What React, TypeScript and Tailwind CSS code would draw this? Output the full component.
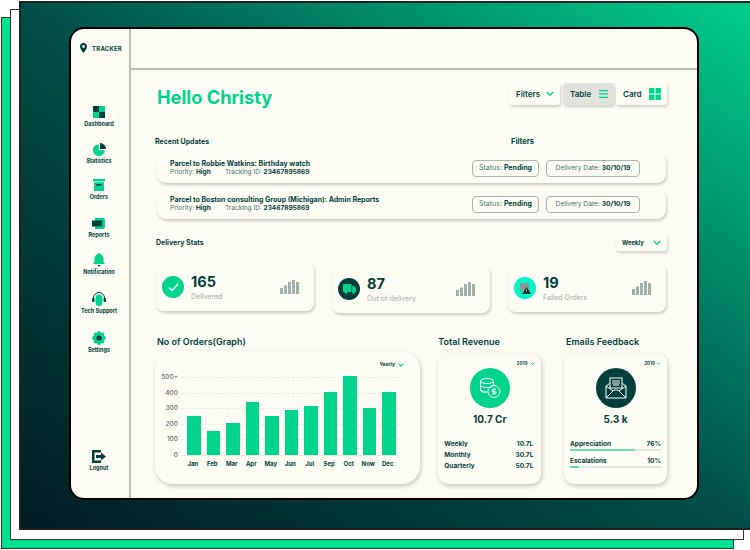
import React from "react";

const F = "font-['Inter','Liberation_Sans',sans-serif]";
const DARK = "#023f3c";
const GREEN = "#00d38c";

const Chevron = ({ w = 8 }: { w?: number }) => (
  <svg width={w} height={w * 0.7} viewBox="0 0 10 7" fill="none">
    <path d="M1 1.2 5 5.2 9 1.2" stroke={GREEN} strokeWidth="1.8" />
  </svg>
);

const nav: [string, React.ReactNode, string][] = [
  ["Dashboard", (
    <svg width="12" height="12" viewBox="0 0 12 12"><rect width="6" height="6" fill={DARK} /><rect x="6" width="6" height="6" fill={GREEN} /><rect y="6" width="6" height="6" fill={GREEN} /><rect x="6" y="6" width="6" height="6" fill={DARK} /></svg>
  ), ""],
  ["Statistics", (
    <svg width="13" height="13" viewBox="0 0 13 13"><path d="M5.8 1.3A5.9 5.9 0 1 0 11.7 7.2H5.8Z" fill={GREEN} /><path d="M7 0A6 6 0 0 1 13 6H7Z" fill={DARK} /></svg>
  ), "mt-[14px]"],
  ["Orders", (
    <svg width="12" height="12" viewBox="0 0 12 12"><rect width="12" height="2.5" fill={GREEN} /><rect x="1" y="3.2" width="10" height="8.8" fill={GREEN} /><rect x="3.5" y="5" width="5" height="1.6" fill={DARK} /></svg>
  ), "mt-[13px]"],
  ["Reports", (
    <svg width="13" height="11" viewBox="0 0 13 11"><path d="M3 0h8q2 0 2 2v7q0 2-2 2H3Z" fill={GREEN} /><rect y="2.5" width="10" height="6" fill={DARK} /></svg>
  ), "mt-[15px]"],
  ["Notification", (
    <svg width="12" height="14" viewBox="0 0 12 14"><path d="M6 0q1 0 1 1 3.5 1 3.5 5v3l1.500 2H0l1.500-2V6Q1.500 2 5 1q0-1 1-1Z" fill={GREEN} /><path d="M4.300 12h3.400L6 13.800Z" fill={DARK} /></svg>
  ), "mt-[14px]"],
  ["Tech Support", (
    <svg width="14" height="15" viewBox="0 0 14 15"><path d="M1.500 7V6a5.500 5.500 0 0 1 11 0v1" fill="none" stroke={DARK} strokeWidth="1" /><rect x="3.500" y="2.500" width="7" height="11.500" rx="3.500" fill={GREEN} /><rect x="0" y="6" width="2.500" height="4" rx="1" fill={DARK} /><rect x="11.500" y="6" width="2.500" height="4" rx="1" fill={DARK} /></svg>
  ), "mt-[16px]"],
  ["Settings", (
    <svg width="14" height="14" viewBox="0 0 14 14"><g fill={GREEN}><circle cx="7" cy="7" r="5.400" /><circle cx="7" cy="2" r="1.900" /><circle cx="7" cy="12" r="1.900" /><circle cx="2" cy="7" r="1.900" /><circle cx="12" cy="7" r="1.900" /><circle cx="3.500" cy="3.500" r="1.900" /><circle cx="10.500" cy="3.500" r="1.900" /><circle cx="3.500" cy="10.500" r="1.900" /><circle cx="10.500" cy="10.500" r="1.900" /></g><circle cx="7" cy="7" r="2.600" fill={DARK} /></svg>
  ), "mt-[16px]"],
];

const NavItem = ({ label, icon, cls = "" }: { label: string; icon: React.ReactNode; cls?: string }) => (
  <div className={`flex flex-col items-center ${cls}`}>
    <div className="h-[14px] flex items-center justify-center">{icon}</div>
    <div className="text-[5.500px] leading-[7px] mt-[2px] font-bold text-[#023f3c] whitespace-nowrap">{label}</div>
  </div>
);

const Btn = ({ label, icon, active, cls = "" }: { label: string; icon: React.ReactNode; active?: boolean; cls?: string }) => (
  <div className={`w-[51px] h-[22px] rounded-[3px] flex items-center justify-between pl-[7px] pr-[6px] text-[8px] font-semibold text-[#023f3c] shadow-[1px_2px_3px_rgba(0,0,0,0.18)] ${active ? "bg-[#e2e2df]" : "bg-[#fdfcf4]"} ${cls}`}>
    <span>{label}</span>
    {icon}
  </div>
);

const UpdateRow = ({ title }: { title: string }) => (
  <div className="h-[30px] w-[509px] ml-[2px] rounded-[9px] bg-[#fdfcf4] shadow-[1px_2px_3px_rgba(0,0,0,0.2)] flex items-center pl-[13px]">
    <div className="w-[302px]">
      <div className="text-[7px] leading-[8px] font-bold text-[#023f3c] whitespace-nowrap">{title}</div>
      <div className="flex text-[6.500px] leading-[8px] text-[#49706d]">
        <span className="w-[55px]">Priority: <b className="font-bold text-[#023f3c]">High</b></span>
        <span>Tracking ID: <b className="font-bold text-[#023f3c]">23467895869</b></span>
      </div>
    </div>
    <div className="h-[17px] w-[67px] rounded-[4px] border border-[#a9b5b2] flex items-center justify-center text-[7px] text-[#49706d]">
      Status:&nbsp;<b className="font-bold text-[#023f3c]">Pending</b>
    </div>
    <div className="h-[17px] w-[94px] ml-[7px] rounded-[4px] border border-[#a9b5b2] flex items-center justify-center text-[6.700px] text-[#49706d]">
      Delivery Date:&nbsp;<b className="font-bold text-[#023f3c]">30/10/19</b>
    </div>
  </div>
);

const Bars = () => (
  <svg width="19" height="14" viewBox="0 0 19 14" fill="#a4aeae">
    <rect x="0" y="8" width="3" height="6" /><rect x="4" y="5.500" width="3" height="8.500" /><rect x="8" y="2" width="3" height="12" /><rect x="12" y="0" width="3" height="14" /><rect x="16" y="2" width="3" height="12" />
  </svg>
);

const Stat = ({ icon, value, label, cls }: { icon: React.ReactNode; value: string; label: string; cls: string }) => (
  <div className={`w-[158px] h-[48px] rounded-[8px] bg-[#fdfcf4] shadow-[1px_2px_3px_rgba(0,0,0,0.2)] flex items-center pl-[6px] pr-[15px] ${cls}`}>
    {icon}
    <div className="ml-[7px] flex-1">
      <div className="text-[14.500px] leading-[16px] font-bold text-[#023f3c]">{value}</div>
      <div className="text-[7px] leading-[9px] mt-[2px] text-[#a3aaa8]">{label}</div>
    </div>
    <Bars />
  </div>
);

const months: [string, number][] = [["Jan", 245], ["Feb", 150], ["Mar", 200], ["Apr", 335], ["May", 245], ["Jun", 285], ["Jul", 310], ["Sep", 400], ["Oct", 500], ["Now", 300], ["Dec", 400]];
const ticks = ["500+", "400", "300", "200", "100", "0"];

const Chart = () => (
  <div className="w-[265px] h-[133px] rounded-[18px] bg-[#fdfcf4] shadow-[1px_2px_4px_rgba(0,0,0,0.22)] pt-[10px] pl-[3px]">
    <div className="flex items-center justify-end gap-[3px] pr-[16px] h-[8px] text-[5px] font-bold text-[#023f3c]">Yearly <Chevron w={6} /></div>
    <div className="flex mt-[8px]">
      <div className="w-[20px] h-[86px] flex flex-col justify-between text-[6.500px] leading-[8px] font-medium text-[#5a6f6c] text-right -mt-[4px]">
        {ticks.map((t) => <div key={t}>{t}</div>)}
      </div>
      <div className="w-[220px] ml-[3px]">
        <div className="relative h-[79px] border-b border-[#eceae0]">
          <div className="absolute inset-0 flex flex-col justify-between">
            {ticks.slice(0, 5).map((t) => <div key={t} className="border-t border-dashed border-[#eceae0]" />)}
            <div />
          </div>
          <div className="absolute inset-0 pl-[6px] flex items-end gap-[6px]">
            {months.map(([m, v]) => <div key={m} className="w-[13.500px] bg-[#00d38c]" style={{ height: (v / 500) * 79 }} />)}
          </div>
        </div>
        <div className="flex pl-[2px] mt-[4px]">
          {months.map(([m]) => <div key={m} className="w-[19.500px] text-center text-[6px] leading-[8px] font-bold text-[#023f3c]">{m}</div>)}
        </div>
      </div>
    </div>
  </div>
);

const MiniCard = ({ children }: { children: React.ReactNode }) => (
  <div className="w-[103px] h-[131px] rounded-[10px] bg-[#fdfcf4] shadow-[1px_2px_4px_rgba(0,0,0,0.22)] px-[6px] pt-[8px]">{children}</div>
);

export default function App() {
  return (
    <div className={`w-[750px] h-[550px] bg-white overflow-hidden grid ${F}`}>
      <div className="[grid-area:1/1] ml-[1px] mt-[17px] w-[733px] h-[532px] bg-[#00e08e] border border-[#333]" />
      <div className="[grid-area:1/1] ml-[10px] mt-[9px] w-[734px] h-[531px] bg-white border border-[#333]" />
      <div className="[grid-area:1/1] ml-[19px] mt-[1px] h-[529px] w-[731px] border-t-2 border-l-2 border-b-2 border-[#222] bg-[linear-gradient(to_top_right,#011d20_0%,#014f48_50%,#00cf8c_100%)] pl-[48px] pt-[24px]">
        <div className="w-[630px] h-[473px] rounded-[15px] border-2 border-black bg-[#fdfcf4] flex overflow-hidden">
          {/* Sidebar */}
          <div className="w-[60px] shrink-0 h-full border-r-2 border-[#bdbdb8] flex flex-col items-center">
            <div className="flex items-center gap-[5px] mt-[13px] h-[12px] ml-[2px]">
              <svg width="7" height="10" viewBox="0 0 7 10"><path d="M3.500 0A3.500 3.500 0 0 0 0 3.500C0 6 3.500 10 3.500 10S7 6 7 3.500A3.500 3.500 0 0 0 3.500 0Z" fill={DARK} /><circle cx="3.500" cy="3.500" r="1.400" fill="#fdfcf4" /></svg>
              <span className="text-[6px] font-bold tracking-[0.2px] text-[#023f3c]">TRACKER</span>
            </div>
            <div className="mt-[51px] mr-[2px] flex flex-col items-center">
              {nav.map(([l, i, c]) => <NavItem key={l} label={l} icon={i} cls={c} />)}
            </div>
            <div className="mt-auto mb-[26px] mr-[2px]">
              <NavItem label="Logout" icon={
                <svg width="14" height="13" viewBox="0 0 14 13"><path d="M0 0h9v2.500H2.500v8H9V13H0Z" fill={DARK} /><path d="M4 5h5V2.500L14 6.500l-5 4V8H4Z" fill={DARK} /></svg>
              } />
            </div>
          </div>
          {/* Main */}
          <div className="flex-1 min-w-0">
            <div className="h-[41px] border-b-2 border-[#bdbdb8]" />
            <div className="pl-[24px] pr-[30px]">
              <div className="flex items-center justify-between h-[26px] mt-[11px] ml-[2px]">
                <h1 className="text-[18.200px] font-bold text-[#00d38c] leading-none mt-[6px]">Hello Christy</h1>
                <div className="flex gap-[2px]">
                  <Btn label="Filters" cls="mr-[1px]" icon={<Chevron />} />
                  <Btn label="Table" active icon={<svg width="9" height="8" viewBox="0 0 9 8" fill={GREEN}><rect width="9" height="1.300" /><rect y="3.300" width="9" height="1.300" /><rect y="6.700" width="9" height="1.300" /></svg>} />
                  <Btn label="Card" icon={<svg width="12" height="12" viewBox="0 0 12 12" fill={GREEN}><rect width="5.500" height="5.500" rx="0.800" /><rect x="6.500" width="5.500" height="5.500" rx="0.800" /><rect y="6.500" width="5.500" height="5.500" rx="0.800" /><rect x="6.500" y="6.500" width="5.500" height="5.500" rx="0.800" /></svg>} />
                </div>
              </div>
              <div className="flex mt-[30px] h-[10px] items-center text-[7px] font-bold text-[#023f3c]">
                <span className="w-[356px]">Recent Updates</span>
                <span className="text-[7.500px]">Filters</span>
              </div>
              <div className="mt-[6px] flex flex-col gap-[6px]">
                <UpdateRow title="Parcel to Robbie Watkins: Birthday watch" />
                <UpdateRow title="Parcel to Boston consulting Group (Michigan): Admin Reports" />
              </div>
              <div className="flex items-center justify-between mt-[15px] h-[17px]">
                <span className="text-[7px] font-bold text-[#023f3c] ml-[1px] mt-[1px]">Delivery Stats</span>
                <div className="w-[51px] h-[17px] rounded-[3px] bg-[#fdfcf4] shadow-[1px_2px_3px_rgba(0,0,0,0.18)] flex items-center justify-between pl-[6px] pr-[6px] text-[6px] font-bold text-[#023f3c]">Weekly <Chevron /></div>
              </div>
              <div className="flex justify-between mt-[12px] ml-[1px] w-[510px]">
                <Stat cls="" value="165" label="Delivered" icon={
                  <div className="w-[22px] h-[22px] rounded-full bg-[#00d38c] flex items-center justify-center shrink-0">
                    <svg width="11" height="9" viewBox="0 0 11 9" fill="none"><path d="M1 4.500 4 7.500 10 1" stroke="#fff" strokeWidth="1.500" /></svg>
                  </div>
                } />
                <Stat cls="mt-[2px]" value="87" label="Out of delivery" icon={
                  <div className="w-[22px] h-[22px] rounded-full bg-[#023f3c] flex items-center justify-center shrink-0">
                    <svg width="13" height="10" viewBox="0 0 13 10" fill={GREEN}><rect width="8.500" height="8" rx="0.800" /><path d="M9.200 2H11l2 2.500V8H9.200Z" /><circle cx="3" cy="8.500" r="1.300" /><circle cx="10.500" cy="8.500" r="1.300" /></svg>
                  </div>
                } />
                <Stat cls="mt-[1px]" value="19" label="Failed Orders" icon={
                  <div className="w-[22px] h-[22px] rounded-full bg-[#00f5c8] flex items-center justify-center shrink-0">
                    <svg width="11" height="11" viewBox="0 0 11 11"><rect width="9" height="8" fill="#8f9a98" /><path d="M6.500 4 11 11H2Z" fill="#012f2e" /><rect x="6.200" y="6.500" width="0.800" height="2" fill="#fff" /></svg>
                  </div>
                } />
              </div>
              <div className="flex mt-[23px]">
                <div className="w-[284px]">
                  <div className="text-[9px] leading-[12px] font-semibold text-[#023f3c] ml-[2px]">No of Orders(Graph)</div>
                  <div className="mt-[3px]"><Chart /></div>
                </div>
                <div className="w-[126px]">
                  <div className="text-[9px] leading-[12px] font-semibold text-[#023f3c]">Total Revenue</div>
                  <div className="mt-[5px]">
                    <MiniCard>
                      <div className="flex justify-end items-center gap-[3px] text-[4.500px] leading-[6px] font-bold text-[#023f3c]">2019 <Chevron w={5} /></div>
                      <div className="mx-auto mt-[1px] w-[40px] h-[40px] rounded-full bg-[#00d38c] flex items-center justify-center">
                        <svg width="22" height="22" viewBox="0 0 22 22" fill="none" stroke="#fff" strokeWidth="1"><ellipse cx="8" cy="4" rx="6.500" ry="2.500" /><path d="M1.500 4v9c0 1.400 3 2.500 6.500 2.500M14.500 4v4M1.500 8c0 1.400 3 2.500 6.500 2.500s6.500-1 6.500-2.500M1.500 12.500c0 1.400 3 2.500 6.500 2.500" /><circle cx="15" cy="14.500" r="6" /><path d="M15 11v7M17 12.500h-3a1 1 0 0 0 0 2.200h2a1 1 0 0 1 0 2.200h-3" /></svg>
                      </div>
                      <div className="text-center text-[10px] leading-[12px] font-bold text-[#023f3c] mt-[5px]">10.7 Cr</div>
                      <div className="mt-[14px] flex flex-col gap-[1px] text-[6.500px] leading-[10px] font-bold text-[#023f3c] pr-[2px]">
                        <div className="flex justify-between"><span>Weekly</span><span>10.7L</span></div>
                        <div className="flex justify-between"><span>Monthly</span><span>30.7L</span></div>
                        <div className="flex justify-between"><span>Quarterly</span><span>50.7L</span></div>
                      </div>
                    </MiniCard>
                  </div>
                </div>
                <div className="w-[103px]">
                  <div className="text-[9px] leading-[12px] font-semibold text-[#023f3c] ml-[2px]">Emails Feedback</div>
                  <div className="mt-[5px]">
                    <MiniCard>
                      <div className="flex justify-end items-center gap-[1px] text-[4.500px] leading-[6px] font-bold text-[#023f3c]">2019 <Chevron w={5} /></div>
                      <div className="mx-auto mt-[1px] w-[40px] h-[40px] rounded-full bg-[#023f3c] flex items-center justify-center">
                        <svg width="22" height="22" viewBox="0 0 22 22" fill="none" stroke="#fff" strokeWidth="1"><path d="M1 9 11 2l10 7v12H1Z" /><path d="M1 21 9 13h4l8 8M1 9l7 5M21 9l-7 5" /><rect x="5" y="1" width="12" height="10" fill="#023f3c" /><path d="M7 4h8M7 6h8M8 8h6" /></svg>
                      </div>
                      <div className="text-center text-[10px] leading-[12px] font-bold text-[#023f3c] mt-[5px]">5.3 k</div>
                      <div className="mt-[15px] text-[6.500px] leading-[8px] font-bold text-[#023f3c]">
                        <div className="flex justify-between"><span>Appreciation</span><span>76%</span></div>
                        <div className="h-[2px] mt-[1px] bg-[#e5e5df]"><div className="h-full w-[71%] bg-[#6fdcae]" /></div>
                        <div className="flex justify-between mt-[6px]"><span>Escalations</span><span>10%</span></div>
                        <div className="h-[2px] mt-[1px] bg-[#e5e5df]"><div className="h-full w-[10%] bg-[#6fdcae]" /></div>
                      </div>
                    </MiniCard>
                  </div>
                </div>
              </div>
            </div>
          </div>
        </div>
      </div>
    </div>
  );
}
